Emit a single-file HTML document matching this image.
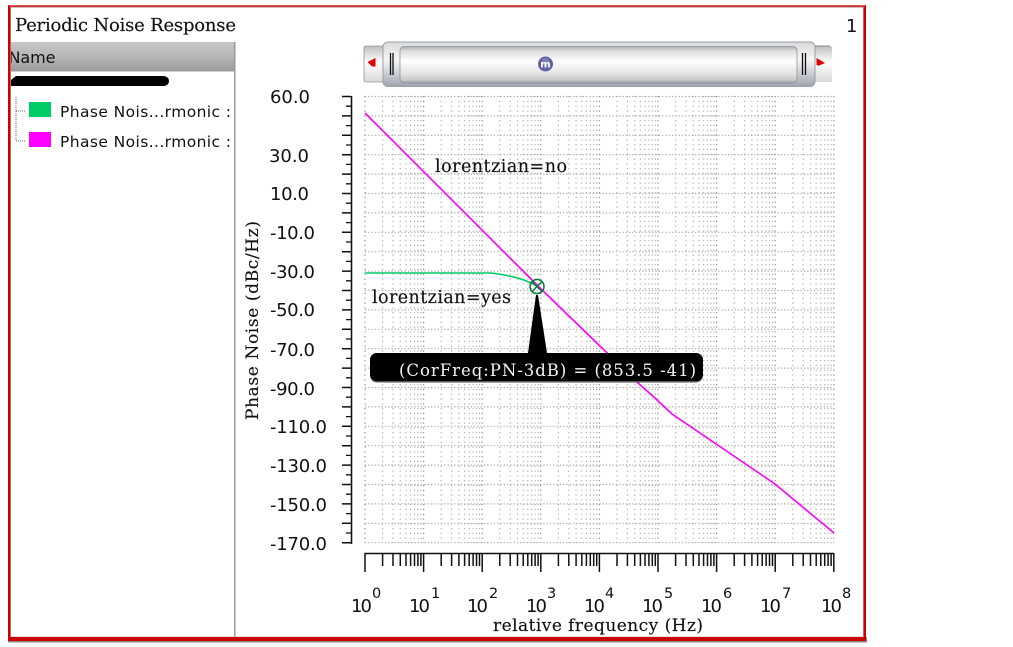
<!DOCTYPE html>
<html>
<head>
<meta charset="utf-8">
<style>
html,body{margin:0;padding:0;background:#fff;width:1013px;height:647px;overflow:hidden}
svg{display:block}
.s{font-family:"DejaVu Sans","Liberation Sans",sans-serif;fill:#111}
.f{font-family:"DejaVu Serif","Liberation Serif",serif;fill:#111;stroke:#111;stroke-width:.15}
.y{font-size:18px}
.n{font-size:18px}
.e{font-size:14.500px}
</style>
</head>
<body>
<svg width="1013" height="647" viewBox="0 0 1013 647" xmlns="http://www.w3.org/2000/svg">
<defs>
<linearGradient id="hd" x1="0" y1="0" x2="0" y2="1"><stop offset="0" stop-color="#c6c6c6"/><stop offset=".5" stop-color="#b6b6b6"/><stop offset="1" stop-color="#9a9a9a"/></linearGradient>
<linearGradient id="sb" x1="0" y1="0" x2="0" y2="1"><stop offset="0" stop-color="#a9adb2"/><stop offset=".12" stop-color="#dcdcdc"/><stop offset=".4" stop-color="#ffffff"/><stop offset=".75" stop-color="#e2e2e2"/><stop offset=".92" stop-color="#c8c8c8"/><stop offset="1" stop-color="#9a9eaa"/></linearGradient>
<linearGradient id="sbo" x1="0" y1="0" x2="0" y2="1"><stop offset="0" stop-color="#d8dadc"/><stop offset=".4" stop-color="#f6f6f6"/><stop offset=".7" stop-color="#ccd0d4"/><stop offset="1" stop-color="#9ea4b0"/></linearGradient>
<linearGradient id="bx" x1="0" y1="0" x2="0" y2="1"><stop offset="0" stop-color="#bdbdbd"/><stop offset=".45" stop-color="#ffffff"/><stop offset="1" stop-color="#d8d8d8"/></linearGradient>
<g id="tk"><path d="M0 553V572M17.6 553V566M28 553V566M35.3 553V566M41 553V566M45.6 553V566M49.5 553V566M52.9 553V566M55.9 553V566" stroke="#111" stroke-width="1.500" fill="none"/></g>
<g id="gv"><path d="M0 96V543" stroke="#999" stroke-width="1.300" stroke-dasharray="1.300 3.500" fill="none"/><path d="M17.6 96V543M28 96V543M35.3 96V543M41 96V543M45.6 96V543M49.5 96V543M52.9 96V543M55.9 96V543" stroke="#b4b4b4" stroke-width="1.200" stroke-dasharray="1.300 3.500" fill="none"/></g>
</defs>

<!-- outer frame -->
<rect x="8" y="637" width="859" height="5.5" fill="#888"/>
<rect x="8" y="5" width="858" height="636" fill="#cc0000"/>
<rect x="9" y="5" width="856" height="1.5" fill="#dd5a5a"/>
<rect x="10.5" y="7" width="853" height="630" fill="#c9c0c0"/>
<rect x="11" y="8" width="852" height="628.5" fill="#fff"/>

<!-- title -->
<text class="f" x="15" y="31" font-size="18" textLength="221" lengthAdjust="spacing">Periodic Noise Response</text>
<text class="s" x="846" y="32" font-size="18">1</text>

<!-- left panel -->
<rect x="11" y="42" width="223.500" height="29.500" fill="url(#hd)"/>
<rect x="234" y="42" width="1.500" height="595" fill="#9a9a9a"/>
<svg x="11" y="42" width="224" height="30"><text class="s" x="-2.500" y="21" font-size="16" textLength="47" lengthAdjust="spacing">Name</text></svg>
<path d="M11 80L16 76H164Q169 77 169 81Q169 85 164 86H11Z" fill="#000"/>
<path d="M16 97V141M16 111H25M16 141H25" stroke="#666" stroke-width="1" stroke-dasharray="1 1" fill="none"/>
<rect x="29" y="102" width="22" height="15" fill="#00cc66"/>
<rect x="29" y="132" width="22" height="15" fill="#ff00ff"/>
<text class="s" x="60" y="117" font-size="15.500" textLength="171" lengthAdjust="spacing">Phase Nois...rmonic :</text>
<text class="s" x="60" y="147" font-size="15.500" textLength="171" lengthAdjust="spacing">Phase Nois...rmonic :</text>

<!-- scrollbar -->
<path d="M366 46H383V82H366Q364 82 364 80V48Q364 46 366 46Z" fill="url(#bx)" stroke="#777" stroke-width=".6"/>
<path d="M813 46H830Q832 46 832 49V82H813Z" fill="url(#bx)"/>
<path d="M813 46H830" stroke="#888" stroke-width="1"/>
<path d="M367.500 62L375.500 58V66.500H372Z" fill="#e00000"/>
<path d="M816.500 58L825 63L818 66V65H816.500Z" fill="#e00000"/>
<rect x="383" y="42" width="432" height="44.500" rx="5" fill="url(#sbo)" stroke="#9aa0a4" stroke-width="1"/>
<rect x="400" y="46.500" width="397" height="36.500" rx="4" fill="url(#sb)" stroke="#8e949c" stroke-width=".8"/>
<path d="M390.500 53V75M393 53V75M802.500 53V75M805.500 53V75" stroke="#111" stroke-width="1.300"/>
<circle cx="545.500" cy="64" r="7.500" fill="#62629e"/>
<circle cx="545.500" cy="62" r="4" fill="#8a8ab8" opacity=".7"/>
<text x="545.500" y="67.500" text-anchor="middle" font-family="'DejaVu Sans',sans-serif" font-size="10" font-weight="bold" fill="#fff">m</text>

<!-- grid -->
<path d="M365 96.500H834M365 115.900H834M365 135.300H834M365 154.700H834M365 174.100H834M365 193.500H834M365 212.900H834M365 232.300H834M365 251.700H834M365 271.100H834M365 290.500H834M365 309.900H834M365 329.300H834M365 348.700H834M365 368.100H834M365 387.500H834M365 406.900H834M365 426.300H834M365 445.700H834M365 465.100H834M365 484.500H834M365 503.900H834M365 523.300H834M365 542.700H834" stroke="#aaa" stroke-width="1.200" stroke-dasharray="1.300 2" fill="none"/>
<use href="#gv" x="365"/><use href="#gv" x="423.600"/><use href="#gv" x="482.200"/><use href="#gv" x="540.800"/><use href="#gv" x="599.400"/><use href="#gv" x="658"/><use href="#gv" x="716.600"/><use href="#gv" x="775.200"/>
<path d="M833.800 96V543" stroke="#999" stroke-width="1.300" stroke-dasharray="1.300 3.500" fill="none"/>

<!-- y axis -->
<path d="M351.500 96V544" stroke="#111" stroke-width="1.600" fill="none"/>
<path d="M342 96.500H351M342 115.900H351M342 135.300H351M342 154.700H351M342 174.100H351M342 193.500H351M342 212.900H351M342 232.300H351M342 251.700H351M342 271.100H351M342 290.500H351M342 309.900H351M342 329.300H351M342 348.700H351M342 368.100H351M342 387.500H351M342 406.900H351M342 426.300H351M342 445.700H351M342 465.100H351M342 484.500H351M342 503.900H351M342 523.300H351M342 542.700H351" stroke="#111" stroke-width="1.500"/>
<path d="M346 106.200H351M346 125.600H351M346 145H351M346 164.400H351M346 183.800H351M346 203.200H351M346 222.600H351M346 242H351M346 261.400H351M346 280.800H351M346 300.200H351M346 319.600H351M346 339H351M346 358.400H351M346 377.800H351M346 397.200H351M346 416.600H351M346 436H351M346 455.400H351M346 474.800H351M346 494.200H351M346 513.600H351M346 533H351" stroke="#111" stroke-width="1.300"/>
<text class="s y" x="270" y="103" textLength="40">60.0</text>
<text class="s y" x="269" y="162" textLength="40">30.0</text>
<text class="s y" x="270" y="200" textLength="39">10.0</text>
<text class="s y" x="270" y="239" textLength="45">-10.0</text>
<text class="s y" x="270" y="278" textLength="45">-30.0</text>
<text class="s y" x="270" y="316" textLength="45">-50.0</text>
<text class="s y" x="270" y="356" textLength="45">-70.0</text>
<text class="s y" x="270" y="395" textLength="45">-90.0</text>
<text class="s y" x="270" y="433" textLength="57">-110.0</text>
<text class="s y" x="270" y="472" textLength="57">-130.0</text>
<text class="s y" x="270" y="511" textLength="57">-150.0</text>
<text class="s y" x="270" y="550" textLength="57">-170.0</text>
<text class="f" transform="translate(258 420) rotate(-90)" x="0" y="0" font-size="17" textLength="199" lengthAdjust="spacing">Phase Noise (dBc/Hz)</text>

<!-- x axis -->
<path d="M364.500 553.500H834" stroke="#111" stroke-width="1.600"/>
<use href="#tk" x="365"/><use href="#tk" x="423.600"/><use href="#tk" x="482.200"/><use href="#tk" x="540.800"/><use href="#tk" x="599.400"/><use href="#tk" x="658"/><use href="#tk" x="716.600"/><use href="#tk" x="775.200"/>
<path d="M833.800 553V572" stroke="#111" stroke-width="1.500"/>
<text class="s n" x="351" y="612" textLength="21">10</text><text class="s e" x="372" y="598">0</text>
<text class="s n" x="409" y="612" textLength="21">10</text><text class="s e" x="431" y="598">1</text>
<text class="s n" x="467" y="612" textLength="21">10</text><text class="s e" x="489" y="598">2</text>
<text class="s n" x="526" y="612" textLength="21">10</text><text class="s e" x="547" y="598">3</text>
<text class="s n" x="584" y="612" textLength="21">10</text><text class="s e" x="605" y="598">4</text>
<text class="s n" x="642" y="612" textLength="21">10</text><text class="s e" x="664" y="598">5</text>
<text class="s n" x="701" y="612" textLength="21">10</text><text class="s e" x="723" y="598">6</text>
<text class="s n" x="760" y="612" textLength="21">10</text><text class="s e" x="782" y="598">7</text>
<text class="s n" x="821" y="612" textLength="21">10</text><text class="s e" x="842" y="598">8</text>
<text class="f" x="493" y="631" font-size="17" textLength="210" lengthAdjust="spacing">relative frequency (Hz)</text>

<!-- curves -->
<path d="M365 113L537 285L637 382L655 398L672 414L775 484L834 533" stroke="#ff00ff" stroke-width="1.600" fill="none"/>
<path d="M365 273H490Q520 276 537 286" stroke="#00cc66" stroke-width="1.600" fill="none"/>
<text class="f" x="435" y="172" font-size="17.500" textLength="132" lengthAdjust="spacing">lorentzian=no</text>
<text class="f" x="372" y="303" font-size="17.500" textLength="139" lengthAdjust="spacing">lorentzian=yes</text>

<!-- marker -->
<circle cx="537" cy="286.500" r="7" fill="none" stroke="#007a33" stroke-width="1.500"/>
<path d="M532 281.500L542 291.500M542 281.500L532 291.500" stroke="#007a33" stroke-width="1.300"/>
<path d="M536 295L538 295L547 353H528Z" fill="#000"/>
<rect x="370" y="353" width="333" height="29.500" rx="7" fill="#555"/>
<rect x="370" y="353" width="333" height="28" rx="7" fill="#000"/>
<text class="f" x="399" y="376" font-size="16.500" textLength="297" lengthAdjust="spacing" style="fill:#f4f4f4;stroke:none">(CorFreq:PN-3dB) = (853.5 -41)</text>
</svg>
</body>
</html>
